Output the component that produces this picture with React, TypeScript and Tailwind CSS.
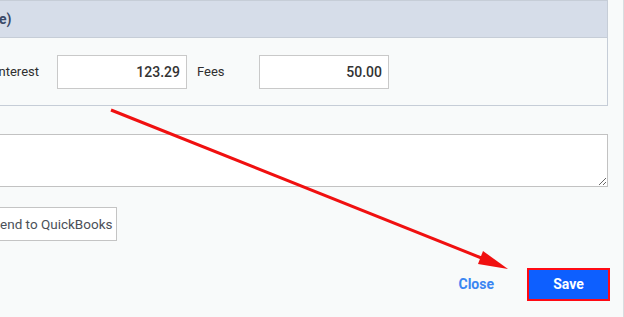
import React from "react";

function Field({ label, value }: { label: string; value: string }) {
  return (
    <>
      <label className="w-[52px] shrink-0 text-[13px] text-[#2f2f2f]">{label}</label>
      <input
        readOnly
        value={value}
        className="h-[34px] w-[130px] shrink-0 border border-[#c9c9c9] bg-white px-[6px] text-right text-[14px] font-medium text-[#333] outline-none"
      />
    </>
  );
}

export default function App() {
  return (
    <div
      className="relative h-[317px] w-[624px] overflow-hidden border-r border-[#d9dde0] bg-[#f8fafa] pr-[15px]"
      style={{ fontFamily: "Roboto, 'Liberation Sans', sans-serif" }}
    >
      <div className="ml-[-13px] flex flex-col">
        {/* Amounts panel */}
        <div className="border border-[#c6cdd7] bg-[#f8fafa]">
          <div className="flex h-[37px] items-center border-b border-[#c6cdd7] bg-[#d6dde9] text-[14px] font-bold whitespace-nowrap text-[#3b4a68]">
            <span className="-ml-[9px]">(Fee)</span>
          </div>
          <div className="flex h-[67px] items-center gap-[10px] pl-[7px]">
            <Field label="Interest" value="123.29" />
            <Field label="Fees" value="50.00" />
          </div>
        </div>

        {/* Notes */}
        <textarea className="mt-[28px] h-[53px] w-full border border-[#c2c2c2] bg-white outline-none" />

        <div className="mt-[20px]">
          <button className="h-[34px] border border-[#c4c4c4] bg-white pr-[4px] pl-[4px] text-[13.5px] text-[#4b5058]">
            Send to QuickBooks
          </button>
        </div>

        {/* Footer */}
        <div className="mt-[29px] flex items-center justify-end">
          <button className="mr-[35px] text-[14px] font-bold text-[#3a86f2]">Close</button>
          <button className="h-[29px] w-[79px] bg-[#0d5fff] text-[14px] font-bold text-white ring-2 ring-[#ff0a14]">
            Save
          </button>
        </div>
      </div>

      {/* annotation arrow */}
      <svg className="pointer-events-none absolute inset-0" width="624" height="317">
        <line x1="111" y1="110" x2="484" y2="259" stroke="#f01010" strokeWidth="3" />
        <polygon points="508,269 478,264 483,251" fill="#f01010" />
      </svg>
    </div>
  );
}
